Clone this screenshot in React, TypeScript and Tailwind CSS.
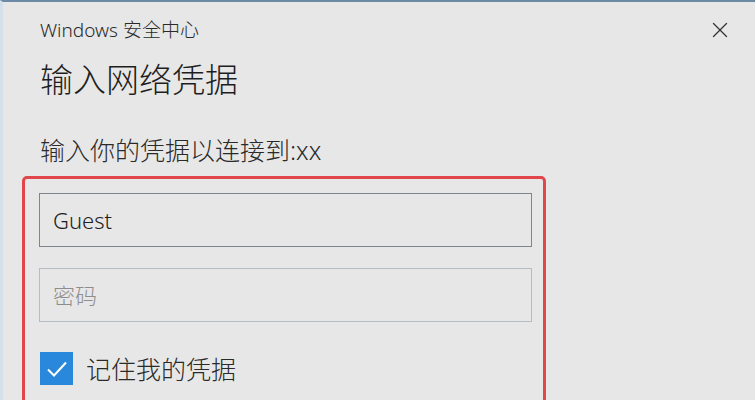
import { X } from 'lucide-react';

const font = { fontFamily: '"Noto Sans", "Noto Sans CJK SC", sans-serif' };

export default function App() {
    return (
        <div
            style={font}
            className="w-[755px] h-[400px] overflow-hidden bg-[#e7e7e7] border-t-2 border-t-[#6b8aa6] border-l-[3px] border-l-[#d3e0ea] text-[#222] font-light"
        >
            <div className="pl-[19px] pr-[22px]">
                {/* header */}
                <div className="flex items-center justify-between pt-[15px] pl-[18px]">
                    <span className="text-[19px] leading-[24px] text-[#2a2a2a]">Windows 安全中心</span>
                    <X className="w-[26px] h-[26px] text-[#333]" strokeWidth={1.2} />
                </div>

                <h1 className="mt-[16px] pl-[18px] text-[33px] leading-[42px] text-[#1e1e1e]">输入网络凭据</h1>

                <p className="mt-[33px] pl-[18px] text-[25px] leading-[32px] text-[#2a2a2a]">输入你的凭据以连接到:xx</p>

                {/* highlighted credential area */}
                <div className="mt-[10px] w-[524px] h-[240px] border-[3px] border-[#e0464a] rounded-[5px] pt-[14px] pl-[14px]">
                    <div className="w-[493px] h-[54px] border border-[#7f858d] flex items-center pl-[13px] text-[22px] text-[#1e1e1e]">
                        Guest
                    </div>
                    <div className="mt-[21px] w-[493px] h-[54px] border border-[#b4bcc6] flex items-center pl-[13px] text-[22px] text-[#8d8d8d]">
                        密码
                    </div>
                    <div className="mt-[30px] flex items-center gap-[13px] pl-[1px]">
                        <div className="w-[33px] h-[33px] bg-[#2a88dc] flex items-center justify-center">
                            <svg width="22" height="18" viewBox="0 0 22 18" fill="none">
                                <path d="M2 9.5 L8 15.5 L20 2.5" stroke="white" strokeWidth="2" />
                            </svg>
                        </div>
                        <span className="text-[25px] leading-[32px] text-[#2a2a2a]">记住我的凭据</span>
                    </div>
                </div>
            </div>
        </div>
    );
}
